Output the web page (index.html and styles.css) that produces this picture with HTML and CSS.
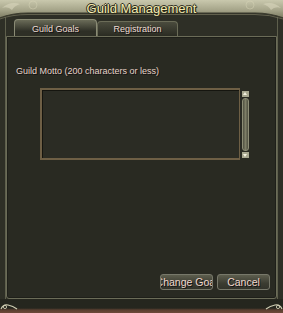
FILE: index.html
```html
<!DOCTYPE html>
<html>
<head>
<meta charset="utf-8">
<link rel="stylesheet" href="styles.css">
</head>
<body>
<div class="window">
  <div class="titlebar">
    <svg class="title-bg" width="283" height="20" viewBox="0 0 283 20">
      <defs>
        <linearGradient id="tg" x1="0" y1="0" x2="0" y2="1">
          <stop offset="0" stop-color="#c9c8ad"/>
          <stop offset="0.55" stop-color="#a6a58a"/>
          <stop offset="1" stop-color="#7c7b62"/>
        </linearGradient>
      </defs>
      <path d="M0 0 H283 V18 Q270 13 255 13 H28 Q12 13 0 18 Z" fill="url(#tg)"/>
      <path d="M0 18 Q12 13 28 13 H255 Q270 13 283 18" fill="none" stroke="#3c3c2e" stroke-width="1.2"/>
      <path d="M0 19 Q12 14.5 28 14.5 H255 Q270 14.5 283 19" fill="none" stroke="#6e6d58" stroke-width="0.8"/>
      <path d="M2 8 Q10 1 20 4 Q14 6 12 10 Q8 6 2 8Z" fill="#d8d6bc" opacity="0.6"/>
      <path d="M281 8 Q273 1 263 4 Q269 6 271 10 Q275 6 281 8Z" fill="#d8d6bc" opacity="0.6"/>
      <circle cx="33" cy="5" r="4" fill="none" stroke="#d6d4b8" stroke-width="0.8" opacity="0.6"/>
      <circle cx="250" cy="5" r="4" fill="none" stroke="#d6d4b8" stroke-width="0.8" opacity="0.6"/>
    </svg>
    <span class="title">Guild Management</span>
  </div>
  <div class="frame">
    <div class="tabs">
      <div class="tab active">Guild Goals</div>
      <div class="tab">Registration</div>
    </div>
    <div class="panel">
      <div class="label">Guild Motto (200 characters or less)</div>
      <div class="motto-row">
        <div class="textarea"></div>
        <div class="scrollbar">
          <div class="arrow up"></div>
          <div class="thumb"></div>
          <div class="arrow down"></div>
        </div>
      </div>
      <div class="buttons">
        <div class="btn"><span class="btn-text">Change Goal</span></div>
        <div class="btn"><span class="btn-text">Cancel</span></div>
      </div>
    </div>
  </div>
  <div class="footer">
    <svg class="orn orn-l" width="18" height="8" viewBox="0 0 18 8">
      <path d="M1 7 Q3 2 8 3 Q13 4 17 7" fill="none" stroke="#cfcdb2" stroke-width="1.1"/>
      <circle cx="5" cy="5" r="1.6" fill="none" stroke="#cfcdb2" stroke-width="0.9"/>
    </svg>
    <svg class="orn orn-r" width="18" height="8" viewBox="0 0 18 8">
      <path d="M17 7 Q15 2 10 3 Q5 4 1 7" fill="none" stroke="#cfcdb2" stroke-width="1.1"/>
      <circle cx="13" cy="5" r="1.6" fill="none" stroke="#cfcdb2" stroke-width="0.9"/>
    </svg>
  </div>
</div>
</body>
</html>
```
FILE: styles.css
```css
html, body {
  margin: 0;
  padding: 0;
  background: #1c1c17;
}
body {
  width: 283px;
  height: 313px;
  overflow: hidden;
  font-family: "Liberation Sans", Arial, sans-serif;
}
.window {
  width: 283px;
  height: 313px;
  background: #2e2f26;
  display: flex;
  flex-direction: column;
  position: relative;
  overflow: hidden;
}
.titlebar {
  position: relative;
  height: 17px;
  display: flex;
  justify-content: center;
  flex: none;
}
.title-bg {
  position: absolute;
  left: 0;
  top: 0;
}
.title {
  position: relative;
  font-size: 13px;
  line-height: 13px;
  padding-top: 2px;
  color: #f4eab0;
  text-shadow: 1px 0 0 #2a2a1c, -1px 0 0 #2a2a1c, 0 1px 0 #2a2a1c, 0 -1px 0 #2a2a1c, 1px 1px 0 #2a2a1c;
}
.frame {
  flex: 1;
  margin: 0 5px 0 5px;
  border-left: 1px solid #5e5f4c;
  border-right: 1px solid #5e5f4c;
  display: flex;
  flex-direction: column;
  padding-top: 2px;
}
.tabs {
  display: flex;
  align-items: flex-end;
  padding-left: 8px;
  height: 17px;
  flex: none;
}
.tab {
  width: 81px;
  height: 15px;
  box-sizing: border-box;
  border: 1px solid #6b6c58;
  border-bottom: none;
  border-radius: 4px 4px 0 0;
  background: linear-gradient(#4a4b3d, #2a2b22);
  color: #eddcd4;
  font-size: 9px;
  line-height: 15px;
  text-align: center;
  text-shadow: 1px 1px 0 #111;
}
.tab.active {
  width: 83px;
  height: 17px;
  line-height: 19px;
  background: linear-gradient(#6a6b58, #2e2f26 70%);
  border-color: #8a8b75;
}
.panel {
  flex: 1;
  border: 1px solid #6b6c58;
  border-radius: 0 0 3px 3px;
  background: #292a22;
  display: flex;
  flex-direction: column;
  padding: 29px 0 0 9px;
  box-shadow: inset 0 0 0 1px #1e1f19;
}
.label {
  font-size: 9px;
  line-height: 11px;
  color: #e6d3c9;
  text-shadow: 1px 1px 0 #111;
}
.motto-row {
  display: flex;
  margin: 11px 0 0 24px;
  align-items: flex-start;
}
.textarea {
  width: 200px;
  height: 72px;
  box-sizing: border-box;
  border: 1px solid #1a1a14;
  border-top: 2px solid #6e5f45;
  border-left: 2px solid #6e5f45;
  border-bottom: 2px solid #6e5f45;
  border-right: 1px solid #6e5f45;
  background: #2b2c24;
  box-shadow: inset 1px 1px 0 #15150f;
}
.scrollbar {
  width: 9px;
  height: 67px;
  margin-top: 3px;
  margin-left: 1px;
  display: flex;
  flex-direction: column;
  align-items: center;
}
.arrow {
  width: 7px;
  height: 6px;
  background: #a8a890;
  position: relative;
  flex: none;
}
.arrow::after {
  content: "";
  position: absolute;
  left: 1px;
  border-left: 2.5px solid transparent;
  border-right: 2.5px solid transparent;
}
.arrow.up::after {
  top: 1px;
  border-bottom: 3px solid #f4f2e0;
}
.arrow.down::after {
  top: 2px;
  border-top: 3px solid #f4f2e0;
}
.thumb {
  flex: 1;
  width: 7px;
  margin: 1px 0;
  box-sizing: border-box;
  border-radius: 3px;
  border: 1px solid #8d8e76;
  background: linear-gradient(90deg, #4e4f40, #7d7e66 50%, #4e4f40);
}
.buttons {
  margin-top: auto;
  margin-bottom: 8px;
  display: flex;
  justify-content: flex-end;
  gap: 4px;
  padding-right: 6px;
}
.btn {
  width: 53px;
  height: 16px;
  box-sizing: border-box;
  border: 1px solid #77786a;
  border-radius: 3px;
  background: linear-gradient(#5d5e4e, #3b3c31 60%, #33342b);
  color: #eed7cd;
  font-size: 10.5px;
  line-height: 15px;
  overflow: hidden;
  white-space: nowrap;
  display: flex;
  justify-content: center;
  text-shadow: 1px 1px 0 #111;
}
.btn-text {
  flex: none;
}
.footer {
  height: 14px;
  flex: none;
  position: relative;
  background: linear-gradient(#25261e 0, #25261e 65%, #5a3f30 78%, #6e4a3a 100%);
}
.orn {
  position: absolute;
  bottom: 3px;
}
.orn-l { left: 0; }
.orn-r { right: 0; }
```
